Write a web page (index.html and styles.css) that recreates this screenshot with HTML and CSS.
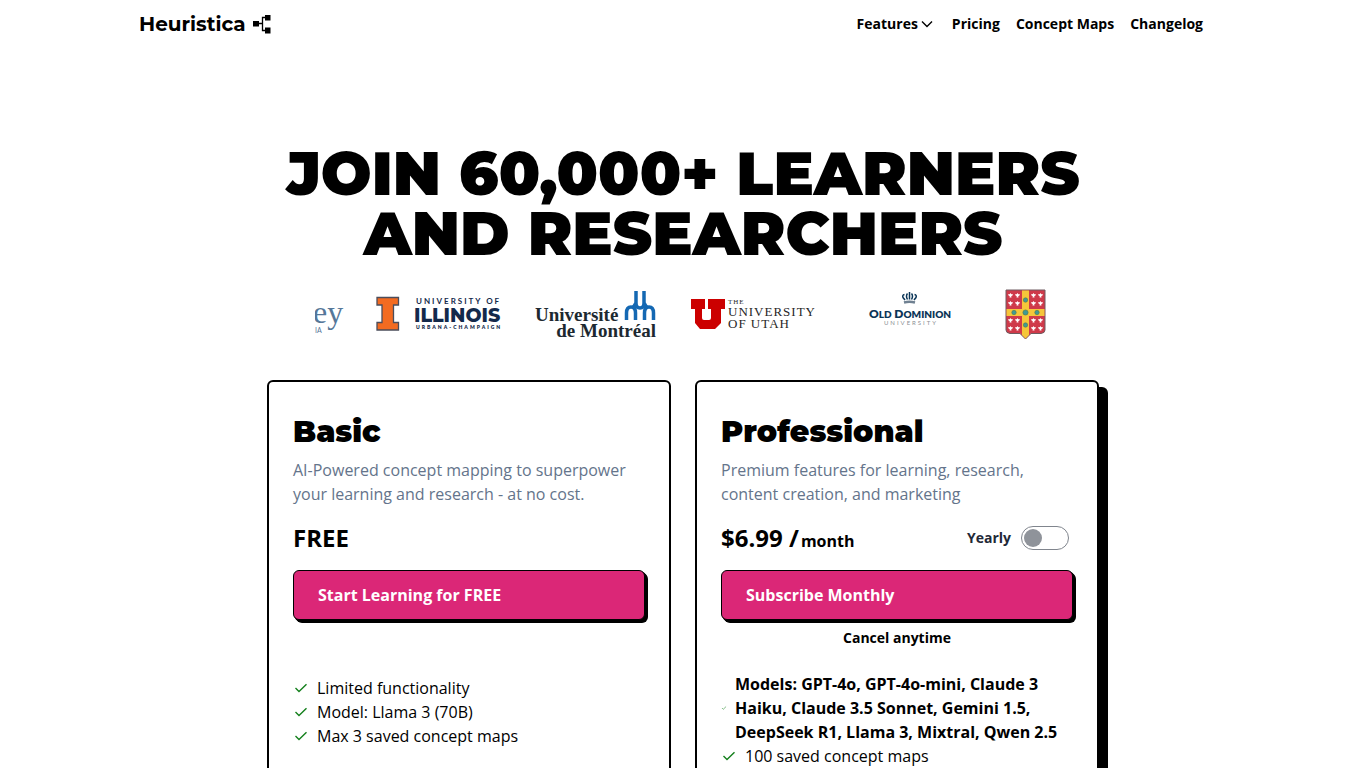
FILE: index.html
```html
<!DOCTYPE html>
<html lang="en">
<head>
<meta charset="utf-8">
<meta name="viewport" content="width=device-width, initial-scale=1">
<title>Heuristica Pricing</title>
<link rel="stylesheet" href="styles.css">
</head>
<body>
<svg class="sprite" aria-hidden="true">
  <symbol id="check" viewBox="0 0 16 16"><path d="M2.500 8 6 11.500 13.500 4.200" fill="none" stroke="currentColor" stroke-width="1.400"/></symbol>
  <symbol id="lily" viewBox="0 0 6 6"><path d="M3 0 4 1.500 5.800 1.300 5.200 3.300 3.900 3.600 4.200 5.500H1.800L2.100 3.600.800 3.300.200 1.300 2 1.500Z" fill="#fff"/></symbol>
</svg>

<header class="header">
  <a class="brand" href="#">Heuristica
    <svg class="brand-icon" viewBox="0 0 20 20" aria-hidden="true"><path d="M6 9.500H10M14 3.500H10.500V16.500H14" fill="none" stroke="#000" stroke-width="1.300"/><path d="M1 7H7V12.500H1ZM13 1H18.500V6.500H13ZM13 13.500H18.500V19.500H13Z"/></svg>
  </a>
  <nav class="nav">
    <button class="nav-item nav-menu" type="button">Features
      <svg class="chevron" viewBox="0 0 12 12" aria-hidden="true"><path d="M1 3.500 6 8.500 11 3.500" fill="none" stroke="#000" stroke-width="1.400"/></svg>
    </button>
    <a class="nav-item" href="#">Pricing</a>
    <a class="nav-item" href="#">Concept Maps</a>
    <a class="nav-item" href="#">Changelog</a>
  </nav>
</header>

<main>
  <h1 class="title">JOIN 60,000+ LEARNERS<br>AND RESEARCHERS</h1>

  <div class="logos">
    <svg class="logo" width="29" height="51" viewBox="0 0 29 51" fill="#557799">
      <text class="serif" x="-2" y="34" font-size="32">ey</text>
      <text class="sans" x="0" y="44" font-size="7">IA</text>
    </svg>
    <svg class="logo" width="127" height="51" viewBox="0 0 127 51" fill="#13294b">
      <path d="M1 8.500H22.500V16H17.500V33.500H22.500V41H1V33.500H6V16H1Z" fill="#f36b21" stroke="#4b4d5b" stroke-width="1.300"/>
      <text class="sans tracked" x="40" y="15" font-size="8" font-weight="700">UNIVERSITY OF</text>
      <text class="mont" x="38" y="33" font-size="19" font-weight="800">ILLINOIS</text>
      <text class="sans tracked" x="40" y="40" font-size="5" font-weight="800">URBANA-CHAMPAIGN</text>
    </svg>
    <svg class="logo" width="124" height="51" viewBox="0 0 124 51" fill="#1d2930">
      <text class="serif" x="0" y="32" font-size="19" font-weight="700">Université</text>
      <text class="serif" x="121" y="48" font-size="19" font-weight="700" text-anchor="end">de Montréal</text>
      <path d="M101 2V14Q101 19 105 19T109 14V2M91.500 31V24Q91.500 18 96 18T100.500 24V31M109.500 31V24Q109.500 18 114 18T118.500 24V31M98 19 101 14M112 19 109 14" fill="none" stroke="#1468b3" stroke-width="3.500"/>
    </svg>
    <svg class="logo" width="126" height="51" viewBox="0 0 126 51" fill="#262626">
      <path d="M0 10H14V20H11V29Q11 31 13 31H18Q20 31 20 29V20H17V10H34V20H30V34L24 40H9L4 34V20H0Z" fill="#c00"/>
      <text class="serif tracked-utah" x="37" y="15" font-size="7">THE</text>
      <text class="serif tracked-utah" x="37" y="27" font-size="13">UNIVERSITY</text>
      <text class="serif tracked-utah" x="37" y="39" font-size="13">OF UTAH</text>
    </svg>
    <svg class="logo" width="124" height="51" viewBox="0 0 124 51" fill="#0b3557">
      <g fill="none" stroke="#0b3557" stroke-width="1.500"><path d="M56 11 54 8.500Q53 6 55.500 5.500M65 11 67 8.500Q68 6 65.500 5.500M58.500 10.500Q56.500 7 58.500 4.500M62.500 10.500Q64.500 7 62.500 4.500M60.500 3V10.500"/><path d="M55 13.500Q60.500 12 66 13.500" stroke="#6f8091" stroke-width="2.500"/></g>
      <text class="sans" x="61" y="29" font-size="12" font-weight="800" text-anchor="middle">O<tspan font-size="10">LD</tspan> D<tspan font-size="10">OMINION</tspan></text>
      <text class="sans tracked" x="62" y="36" font-size="6" fill="#8b8f94" text-anchor="middle">UNIVERSITY</text>
    </svg>
    <svg class="logo" width="41" height="51" viewBox="0 0 41 51">
      <path d="M1 1H40V41Q40 44 36 44.500H26L20.500 50 15 44.500H5Q1 44 1 41Z" fill="#cf3a4a" stroke="#6f5b60"/>
      <path d="M17 1.500H24V46L20.500 49.500 17 46ZM1.500 20H39.500V27H1.500Z" fill="#f5c63a"/>
      <g fill="#3f9a94" stroke="#56764e" stroke-width=".6"><circle cx="20.500" cy="11" r="2.200"/><circle cx="9" cy="23.500" r="2.200"/><circle cx="20.500" cy="23.500" r="2.600"/><circle cx="32" cy="23.500" r="2.200"/><circle cx="20.500" cy="36" r="2.200"/></g>
      <use href="#lily" x="3" y="4" width="5" height="5"/><use href="#lily" x="10" y="4" width="5" height="5"/><use href="#lily" x="26" y="4" width="5" height="5"/><use href="#lily" x="33" y="4" width="5" height="5"/>
      <use href="#lily" x="3" y="12" width="5" height="5"/><use href="#lily" x="10" y="12" width="5" height="5"/><use href="#lily" x="26" y="12" width="5" height="5"/><use href="#lily" x="33" y="12" width="5" height="5"/>
      <use href="#lily" x="3" y="29" width="5" height="5"/><use href="#lily" x="10" y="29" width="5" height="5"/><use href="#lily" x="26" y="29" width="5" height="5"/><use href="#lily" x="33" y="29" width="5" height="5"/>
      <use href="#lily" x="3" y="37" width="5" height="5"/><use href="#lily" x="10" y="37" width="5" height="5"/><use href="#lily" x="26" y="37" width="5" height="5"/><use href="#lily" x="33" y="37" width="5" height="5"/>
    </svg>
  </div>

  <div class="plans">
    <section class="card">
      <h2 class="plan-name">Basic</h2>
      <p class="plan-text">AI-Powered concept mapping to superpower your learning and research - at no cost.</p>
      <div class="price-row"><p class="price">FREE</p></div>
      <button class="cta" type="button">Start Learning for FREE</button>
      <ul class="features features-basic">
        <li><svg class="check"><use href="#check"/></svg>Limited functionality</li>
        <li><svg class="check"><use href="#check"/></svg>Model: Llama 3 (70B)</li>
        <li><svg class="check"><use href="#check"/></svg>Max 3 saved concept maps</li>
      </ul>
    </section>
    <section class="card card-raised">
      <h2 class="plan-name">Professional</h2>
      <p class="plan-text">Premium features for learning, research, content creation, and marketing</p>
      <div class="price-row">
        <p class="price">$6.99 /<span class="period">month</span></p>
        <label class="billing" for="yearly">Yearly<input class="toggle" id="yearly" type="checkbox" role="switch"></label>
      </div>
      <button class="cta" type="button">Subscribe Monthly</button>
      <p class="note">Cancel anytime</p>
      <ul class="features">
        <li class="strong"><svg class="check check-small"><use href="#check"/></svg><span>Models: GPT-4o, GPT-4o-mini, Claude 3 Haiku, Claude 3.5 Sonnet, Gemini 1.5, DeepSeek R1, Llama 3, Mixtral, Qwen 2.5</span></li>
        <li><svg class="check"><use href="#check"/></svg>100 saved concept maps</li>
      </ul>
    </section>
  </div>
</main>
</body>
</html>
```
FILE: styles.css
```css
* { box-sizing: border-box; }

body {
  margin: 0;
  background: #fff;
  color: #000;
  font: 16px/24px "Open Sans", "Noto Sans", sans-serif;
}

h1, h2, p, ul { margin: 0; padding: 0; }
button { font: inherit; color: inherit; cursor: pointer; }
a { color: inherit; text-decoration: none; }

.sprite { display: none; }

.header {
  display: flex;
  align-items: center;
  justify-content: space-between;
  max-width: 1088px;
  height: 48px;
  margin: 0 auto;
  padding-right: 24px;
}

.brand {
  display: flex;
  align-items: center;
  gap: 6px;
  font: 700 20px/28px Montserrat, Inter, sans-serif;
}
.brand-icon { width: 20px; height: 20px; }

.nav { display: flex; gap: 16px; }
.nav-item {
  display: flex;
  align-items: center;
  gap: 3px;
  padding: 0;
  border: 0;
  background: none;
  font-size: 14px;
  font-weight: 700;
  line-height: 20px;
}
.nav-menu { padding-right: 3px; }
.chevron { width: 12px; height: 12px; }

.title {
  margin-top: 96px;
  text-align: center;
  font: 900 60px/60px Montserrat, Inter, sans-serif;
}

.logos {
  display: flex;
  gap: 32px;
  max-width: 736px;
  margin: 25px auto 40px;
  overflow: hidden;
}
.logo { flex: none; }
.serif { font-family: "Liberation Serif", serif; }
.sans { font-family: Lato, "Open Sans", sans-serif; }
.mont { font-family: Montserrat, Inter, sans-serif; }
.tracked { letter-spacing: 2px; }
.tracked-utah { letter-spacing: 1px; }

.plans {
  display: grid;
  grid-template-columns: 1fr 1fr;
  gap: 24px;
  max-width: 832px;
  margin: 0 auto;
}
.card {
  display: flex;
  flex-direction: column;
  padding: 30px 24px 48px;
  border: 2px solid #000;
  border-radius: 6px;
}
.card-raised { box-shadow: 9px 7px 0 #000; }

.plan-name { font: 900 30px/40px Montserrat, Inter, sans-serif; }
.plan-text { margin-top: 6px; color: #64748b; }

.price-row {
  display: flex;
  align-items: center;
  justify-content: space-between;
  height: 32px;
  margin: 16px 0;
  padding-right: 4px;
}
.price { font-size: 24px; font-weight: 700; line-height: 32px; }
.period { margin-left: 2px; font-size: 16px; line-height: 16px; }
.billing {
  display: flex;
  align-items: center;
  gap: 10px;
  color: #1f2937;
  font-size: 14px;
  font-weight: 700;
}
.toggle {
  display: flex;
  align-items: center;
  width: 48px;
  height: 24px;
  margin: 0;
  padding: 0 2px;
  appearance: none;
  border: 1px solid #80858d;
  border-radius: 12px;
}
.toggle::before {
  content: "";
  width: 18px;
  height: 18px;
  border-radius: 50%;
  background: #8f939a;
}
.toggle:checked { justify-content: flex-end; }

.cta {
  height: 50px;
  padding: 0 24px;
  border: 1px solid #000;
  border-radius: 6px;
  background: #db2777;
  box-shadow: 1px 1px 0 #000, 2px 2px 0 #000, 3px 3px 0 #000;
  color: #fff;
  font-weight: 700;
  text-align: left;
}
.note {
  margin-top: 8px;
  text-align: center;
  font-size: 14px;
  font-weight: 700;
  line-height: 20px;
}

.features { margin-top: 24px; list-style: none; }
.features-basic { margin-top: 56px; }
.features li { display: flex; align-items: center; gap: 8px; }
.strong { font-weight: 700; }
.check { flex: none; width: 16px; height: 16px; color: #15801d; }
.check-small { width: 6px; height: 6px; }
```
